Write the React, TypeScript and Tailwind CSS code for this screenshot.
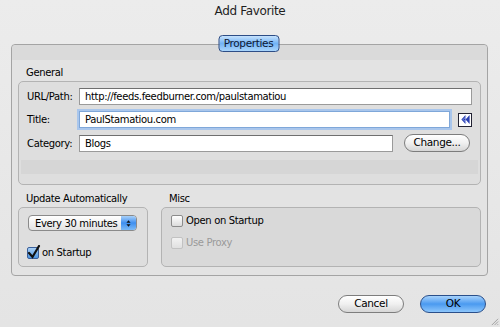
const font = { fontFamily: '"DejaVu Sans", "Liberation Sans", sans-serif' }

function Field({ value, focus, width }: { value: string; focus?: boolean; width: string }) {
  return (
    <div
      className={`${width} h-[17px] bg-white flex items-center pl-[5px] text-[10px] text-black border ${
        focus
          ? 'border-[#7fa7d9] shadow-[0_0_0_2px_#a9c6ec]'
          : 'border-[#9a9a9a] border-t-[#6f6f6f]'
      }`}
    >
      {value}
    </div>
  )
}

function Check({ checked, disabled, label }: { checked?: boolean; disabled?: boolean; label: string }) {
  return (
    <div className={`flex items-center gap-[3px] text-[10px] ${disabled ? 'text-[#9a9a9a]' : 'text-black'}`}>
      <div
        className={`relative w-[12px] h-[12px] rounded-[2px] border ${
          checked
            ? 'border-[#3a5f9a] bg-gradient-to-b from-[#a9d0f5] to-[#4c95e0]'
            : disabled
            ? 'border-[#c2c2c2] bg-gradient-to-b from-[#f2f2f2] to-[#e0e0e0]'
            : 'border-[#8c8c8c] bg-gradient-to-b from-white to-[#dcdcdc]'
        }`}
      >
        {checked && (
          <svg viewBox="0 0 14 14" className="absolute -left-[1px] -top-[3px] w-[14px] h-[14px]">
            <path d="M2 8 L5.5 12 L12 1" fill="none" stroke="#111" strokeWidth="2.2" strokeLinecap="round" />
          </svg>
        )}
      </div>
      <span>{label}</span>
    </div>
  )
}

function Pill({ label, primary, width }: { label: string; primary?: boolean; width: string }) {
  return (
    <div
      className={`${width} h-[18px] rounded-full border flex items-center justify-center text-[10.5px] ${
        primary
          ? 'border-[#2a4f8a] bg-gradient-to-b from-[#a6d2fb] via-[#4a9af0] to-[#8cc6fb] text-black'
          : 'border-[#7d7d7d] bg-gradient-to-b from-white via-[#f0f0f0] to-[#d6d6d6] text-black'
      }`}
    >
      {label}
    </div>
  )
}

export default function App() {
  return (
    <div
      style={font}
      className="w-[500px] h-[327px] bg-gradient-to-b from-[#ececec] to-[#e4e4e4] flex flex-col relative overflow-hidden tracking-[-0.35px]"
    >
      <div className="h-[20px] flex items-center justify-center text-[12px] text-[#1e1e1e] pt-[1px]">Add Favorite</div>

      <div className="relative ml-[11px] mr-[12px] mt-[24px]">
        <div className="h-[232px] border border-[#a4a4a4] rounded-[4px] bg-[#e3e3e3] flex flex-col">
          <div className="h-[15px] bg-[#dadada] rounded-t-[4px]" />

          <div className="px-[6px] pt-[7px]">
            <div className="text-[10px] text-black pl-[8px] leading-[12px]">General</div>
            <div className="mt-[2px] h-[104px] border border-[#b3b3b3] rounded-[5px] bg-[#dedede] flex flex-col">
              <div className="flex flex-col gap-[6px] pt-[6px] px-[8px]">
                <div className="flex items-center">
                  <span className="w-[52px] text-[10px]">URL/Path:</span>
                  <Field width="w-[393px]" value="http://feeds.feedburner.com/paulstamatiou" />
                </div>
                <div className="flex items-center">
                  <span className="w-[52px] text-[10px]">Title:</span>
                  <Field width="w-[371px]" focus value="PaulStamatiou.com" />
                  <div className="ml-[8px] w-[14px] h-[14px] bg-white border border-[#223] flex items-center justify-center">
                    <svg viewBox="0 0 12 12" className="w-[11px] h-[11px]">
                      <path d="M6 1 L1.5 6 L6 11 Z" fill="#2a3fb0" />
                      <path d="M10.5 1 L6 6 L10.5 11 Z" fill="#2a3fb0" />
                      <path d="M7 2.5 L3.5 6 L7 9.5" fill="none" stroke="#9fb3ff" strokeWidth="0.8" />
                    </svg>
                  </div>
                </div>
                <div className="flex items-center">
                  <span className="w-[52px] text-[10px]">Category:</span>
                  <Field width="w-[314px]" value="Blogs" />
                  <div className="ml-[11px]">
                    <Pill label="Change..." width="w-[66px]" />
                  </div>
                </div>
              </div>
              <div className="mt-[8px] mx-[2px] h-[14px] bg-[#d6d6d6]" />
            </div>
          </div>

          <div className="px-[6px] pt-[8px] flex gap-[13px]">
            <div className="flex flex-col w-[130px]">
              <div className="text-[10px] pl-[8px] leading-[12px] whitespace-nowrap">Update Automatically</div>
              <div className="mt-[2px] h-[60px] border border-[#b3b3b3] rounded-[5px] bg-[#dedede] pl-[8px] pt-[7px] flex flex-col">
                <div className="ml-[1px] w-[109px] h-[16px] rounded-[4px] border border-[#8a8a8a] bg-gradient-to-b from-white to-[#e2e2e2] flex items-center text-[10px] pl-[6px] overflow-hidden">
                  <span className="flex-1 whitespace-nowrap">Every 30 minutes</span>
                  <div className="w-[15px] shrink-0 h-full bg-gradient-to-b from-[#a8d0f8] via-[#3d8ff0] to-[#7cbaf6] flex flex-col items-center justify-center">
                    <svg viewBox="0 0 6 10" className="w-[5px] h-[9px]">
                      <path d="M0.5 4 L3 1 L5.5 4 Z M0.5 6 L3 9 L5.5 6 Z" fill="#111" />
                    </svg>
                  </div>
                </div>
                <div className="mt-[14px]">
                  <Check checked label="on Startup" />
                </div>
              </div>
            </div>
            <div className="flex flex-col flex-1">
              <div className="text-[10px] pl-[8px] leading-[12px]">Misc</div>
              <div className="mt-[2px] h-[60px] border border-[#b3b3b3] rounded-[5px] bg-[#d9d9d9] pl-[9px] pt-[5px] flex flex-col gap-[7px]">
                <Check label="Open on Startup" />
                <Check disabled label="Use Proxy" />
              </div>
            </div>
          </div>
        </div>

        <div className="absolute left-1/2 -translate-x-1/2 -top-[9px] ml-[-1px]">
          <div className="w-[61px] h-[17px] rounded-[4px] border border-[#2d4d86] bg-gradient-to-b from-[#c6e2fc] via-[#72b3f5] to-[#a9d5fb] flex items-center justify-center text-[10.5px] text-[#0d1733]">
            Properties
          </div>
        </div>
      </div>

      <div className="flex justify-end gap-[16px] pr-[14px] mt-[19px]">
        <Pill label="Cancel" width="w-[66px]" />
        <Pill label="OK" primary width="w-[66px]" />
      </div>

      <svg viewBox="0 0 10 10" className="absolute right-[1px] bottom-[1px] w-[9px] h-[9px]">
        <path d="M9 2 L2 9 M9 5 L5 9 M9 8 L8 9" stroke="#8a8a8a" strokeWidth="0.8" />
      </svg>
    </div>
  )
}
